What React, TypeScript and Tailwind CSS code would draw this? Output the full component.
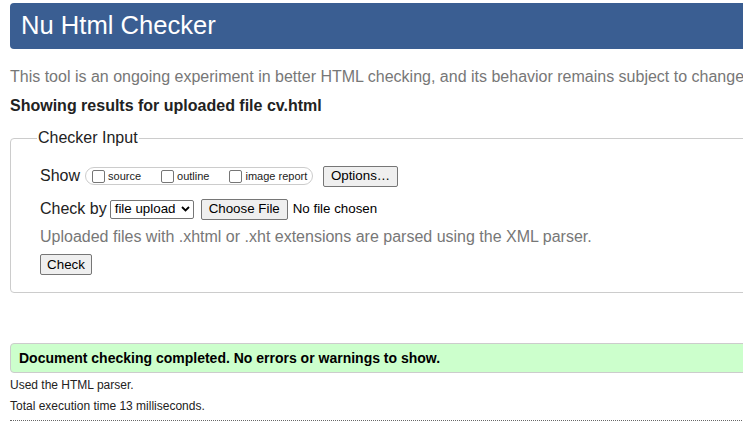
import React from "react";

const Box = ({ label }: { label: string }) => (
  <span className="flex items-center">
    <span className="w-[13px] h-[13px] border border-[#767676] rounded-[2px] bg-white" />
    <span className="ml-[3px] text-[11px] leading-none text-[#222]">{label}</span>
  </span>
);

const Btn = ({ children, className = "" }: { children: React.ReactNode; className?: string }) => (
  <span
    className={`inline-flex items-center justify-center h-[21px] bg-[#efefef] border border-[#767676] rounded-[2px] text-[13.33px] text-black ${className}`}
  >
    {children}
  </span>
);

export default function App() {
  return (
    <div className="w-[743px] h-[427px] overflow-hidden bg-white font-['Liberation_Sans',Arial,sans-serif] text-[#222]">
      <div className="w-[820px] pl-[10px]">
        <div className="mt-[3px] h-[46px] bg-[#3a5e92] rounded-[4px] flex items-center pl-[11px]">
          <h1 className="text-[25.6px] text-white leading-none">Nu Html Checker</h1>
        </div>

        <p className="mt-[19px] text-[16px] leading-[18px] text-[#777] whitespace-nowrap">
          This tool is an ongoing experiment in better HTML checking, and its behavior remains subject to change
        </p>

        <p className="mt-[11px] text-[16px] leading-[18px] font-bold text-[#222]">
          Showing results for uploaded file cv.html
        </p>

        <fieldset className="mt-[14px] border border-[#ccc] rounded-[4px] pl-[26px] pb-[17px]">
          <legend className="px-[1px] text-[16px] leading-[18px] text-[#222]">Checker Input</legend>

          <div className="ml-[3px] mt-[18px] h-[22px] flex items-center text-[16px]">
            <span>Show</span>
            <div className="ml-[5px] h-[18px] w-[228px] border border-[#ccc] rounded-[9px] flex items-center pl-[6px]">
              <Box label="source" />
              <span className="w-[20px]" />
              <Box label="outline" />
              <span className="w-[20px]" />
              <Box label="image report" />
            </div>
            <Btn className="ml-[10px] w-[75px]">Options…</Btn>
          </div>

          <div className="ml-[3px] mt-[11px] h-[22px] flex items-center text-[16px]">
            <span>Check by</span>
            <span className="ml-[3px] h-[19px] w-[84px] border border-[#767676] rounded-[2px] flex items-center pl-[4px] text-[13.33px] text-black">
              file upload
              <svg className="ml-auto mr-[3px]" width="9" height="6" viewBox="0 0 9 6">
                <path d="M1 1l3.5 3.5L8 1" fill="none" stroke="#000" strokeWidth="1.8" />
              </svg>
            </span>
            <Btn className="ml-[7px] w-[87px]">Choose File</Btn>
            <span className="ml-[5px] text-[13.33px] text-black">No file chosen</span>
          </div>

          <p className="ml-[3px] mt-[8px] text-[16px] leading-[18px] text-[#777]">
            Uploaded files with .xhtml or .xht extensions are parsed using the XML parser.
          </p>

          <div className="ml-[3px] mt-[8px] flex">
            <Btn className="w-[52px] h-[20px]">Check</Btn>
          </div>
        </fieldset>

        <div className="mt-[50px] h-[30px] bg-[#ccffcc] border border-[#ccc] rounded-l-[4px] flex items-center pl-[8px]">
          <span className="text-[14px] font-bold text-black">
            Document checking completed. No errors or warnings to show.
          </span>
        </div>

        <p className="mt-[5px] text-[12px] leading-[15px] text-[#222]">Used the HTML parser.</p>
        <p className="mt-[6px] text-[12px] leading-[15px] text-[#222]">Total execution time 13 milliseconds.</p>
        <div className="mt-[6px] border-t border-dotted border-[#666]" />
      </div>
    </div>
  );
}
